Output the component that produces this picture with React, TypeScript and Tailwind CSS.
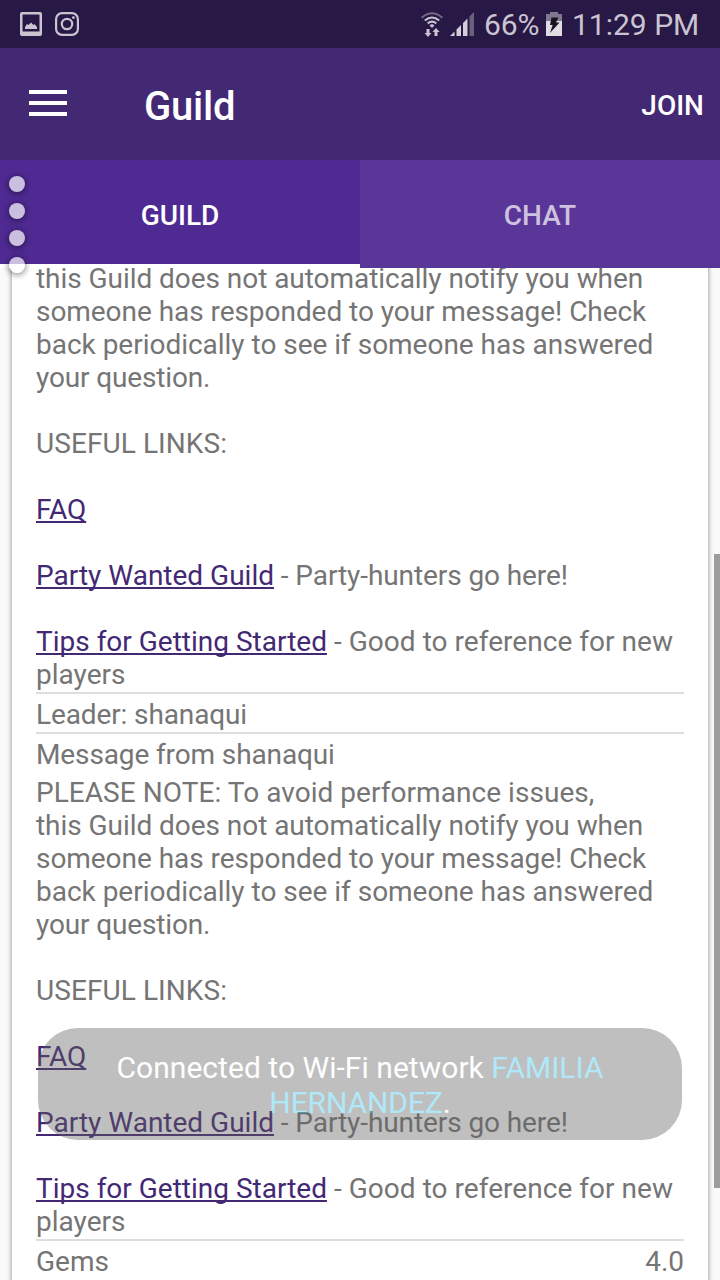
import type { ReactNode } from "react";

function StatusBar() {
  return (
    <div className="flex h-12 shrink-0 items-center bg-[#281845] text-[#cac4d1]">
      <svg className="ml-5 h-6 w-[22px]" viewBox="0 0 22 24">
        <path fillRule="evenodd" fill="#cac4d1" d="M2 0h18a2 2 0 0 1 2 2v20a2 2 0 0 1-2 2H2a2 2 0 0 1-2-2V2A2 2 0 0 1 2 0ZM2.500 2.500v17h17v-17Z" />
        <path fill="#cac4d1" d="M5 17v-2l2-3 1.500 1 2.500-2.500 2.500 2.500 1-1 2.500 3v2Z" />
      </svg>
      <svg className="ml-[13px] h-6 w-6" viewBox="0 0 24 24" fill="none" stroke="#cac4d1" strokeWidth="2.2">
        <rect x="1.1" y="1.1" width="21.8" height="21.8" rx="6" />
        <circle cx="12" cy="12" r="5.2" />
        <circle cx="18.4" cy="5.6" r="1.4" fill="#cac4d1" stroke="none" />
      </svg>
      <svg className="ml-[342px] h-[25px] w-[22px]" viewBox="0 0 22 25" fill="none" stroke="#cac4d1" strokeWidth="2">
        <path stroke="#766b85" d="M.7 5.7Q11-3.1 21.3 5.7" />
        <path d="M3.8 8.6Q11 2.4 18.2 8.6M6.7 11.4q4.3-3.5 8.6 0" />
        <path fill="#cac4d1" stroke="none" d="M8.500 13.200q2.500-1.700 5 0L11 16ZM5.500 17h3v4h2L7 25l-3.500-4h2ZM13.500 24h3v-4h2.200L15 16l-3.500 4h2Z" />
      </svg>
      <svg className="ml-[7px] h-6 w-[25px]" viewBox="0 0 25 24" fill="#d3ceda">
        <path d="M0 24l4.500-4.500V24ZM6.500 24v-6.500L11 13v11ZM13 24V11l4.500-4.500V24Z" />
        <path fill="#6b607c" d="M19.500 24V4.500L24 0v24Z" />
      </svg>
      <span className="ml-[9px] mt-[2px] w-[56px] whitespace-nowrap text-[30px] leading-none tracking-[-0.1px]">66%</span>
      <svg className="ml-[6px] h-6 w-4" viewBox="0 0 16 24">
        <path fill="#81778e" d="M0 2h4V0h8v2h4v8H0Z" />
        <path fill="#dfdce3" d="M0 9h16v15H0Z" />
        <path fill="#171420" d="M5.500 5.500h7l-2.500 5h3.500L4 21l2.700-8H4Z" />
      </svg>
      <span className="ml-[10px] mt-[2px] whitespace-nowrap text-[30px] leading-none">11:29 PM</span>
    </div>
  );
}

function Link({ children }: { children: ReactNode }) {
  return <a className="text-[#432874] underline decoration-2 underline-offset-[2px] [text-decoration-skip-ink:none]">{children}</a>;
}

function Description({ full = false }: { full?: boolean }) {
  return (
    <div className="whitespace-pre leading-[33px]">
      {full && <p className="tracking-[0.05px]">PLEASE NOTE: To avoid performance issues,</p>}
      <p className="tracking-[-0.05px]">this Guild does not automatically notify you when</p>
      <p className="tracking-[-0.05px]">someone has responded to your message! Check</p>
      <p className="tracking-[-0.02px]">back periodically to see if someone has answered</p>
      <p className="tracking-[-0.14px]">your question.</p>
      <p className="mt-[33px] tracking-[0.08px]">USEFUL LINKS:</p>
      <p className="mt-[33px] tracking-[-0.1px]"><Link>FAQ</Link></p>
      <p className="mt-[33px]"><Link>Party Wanted Guild</Link><span className="tracking-[-0.09px]"> - Party-hunters go here!</span></p>
      <p className="mt-[33px]"><Link>Tips for Getting Started</Link><span className="tracking-[0.04px]"> - Good to reference for new</span></p>
      <p>players</p>
    </div>
  );
}

export default function App() {
  return (
    <div className="relative flex h-[1280px] w-[720px] flex-col overflow-hidden bg-[#fafafa] font-['Roboto',sans-serif]">
      <StatusBar />
      <header className="flex h-28 shrink-0 items-center bg-[#432874] pr-4 text-white">
        <div className="-mt-[2px] ml-[29px] flex w-[38px] flex-col gap-[7px]">
          <i className="h-1 bg-white" />
          <i className="h-1 bg-white" />
          <i className="h-1 bg-white" />
        </div>
        <h1 className="ml-[77px] mt-[6px] text-[40px] font-medium leading-none tracking-[-0.2px]">Guild</h1>
        <button className="ml-auto mt-1 text-[28px] font-medium leading-none">JOIN</button>
      </header>
      <nav className="grid h-[108px] shrink-0 grid-cols-2 text-[28px] font-medium leading-none">
        <button className="border-b-4 border-white bg-[#4f2a93] pt-2 text-white">GUILD</button>
        <button className="bg-[#5a3698] pt-1 text-[#cdc2e0]">CHAT</button>
      </nav>
      <main className="min-h-0 flex-1 overflow-hidden px-3">
        <section className="-mt-[6px] h-[1030px] bg-white px-6 text-[28px] text-[#757575] shadow-[0_1px_5px_rgba(0,0,0,0.45)]">
          <Description />
          <div className="mt-px border-t-2 border-[#dedede] pt-1 leading-[33px] tracking-[-0.12px]">Leader: shanaqui</div>
          <div className="mt-px border-t-2 border-[#dedede] pt-1 leading-[33px] tracking-[-0.12px]">Message from shanaqui</div>
          <div className="pt-[5px]"><Description full /></div>
          <div className="mt-px flex justify-between border-t-2 border-[#dedede] pt-1 leading-[33px]">
            <span>Gems</span>
            <span>4.0</span>
          </div>
        </section>
      </main>
      <div className="absolute left-[9px] top-[176px] flex flex-col gap-[11px]">
        {[0, 1, 2, 3].map((n) => (
          <i key={n} className="size-4 rounded-full bg-white/70 shadow-[0_1px_6px_1px_rgba(0,0,0,0.45)]" />
        ))}
      </div>
      <div className="absolute left-[714px] top-[554px] h-[634px] w-[6px] bg-[#9d9d9d]" />
      <div className="absolute left-[38px] top-[1028px] h-28 w-[644px] rounded-[40px] bg-[#616161] pt-[22px] text-center text-[30px] leading-[35px] text-white opacity-40">
        <span className="tracking-[0.04px]">Connected to Wi-Fi network </span>
        <span className="text-[#39caf2]">FAMILIA<br /><span className="tracking-[-0.1px]">HERNANDEZ</span></span>.
      </div>
    </div>
  );
}
